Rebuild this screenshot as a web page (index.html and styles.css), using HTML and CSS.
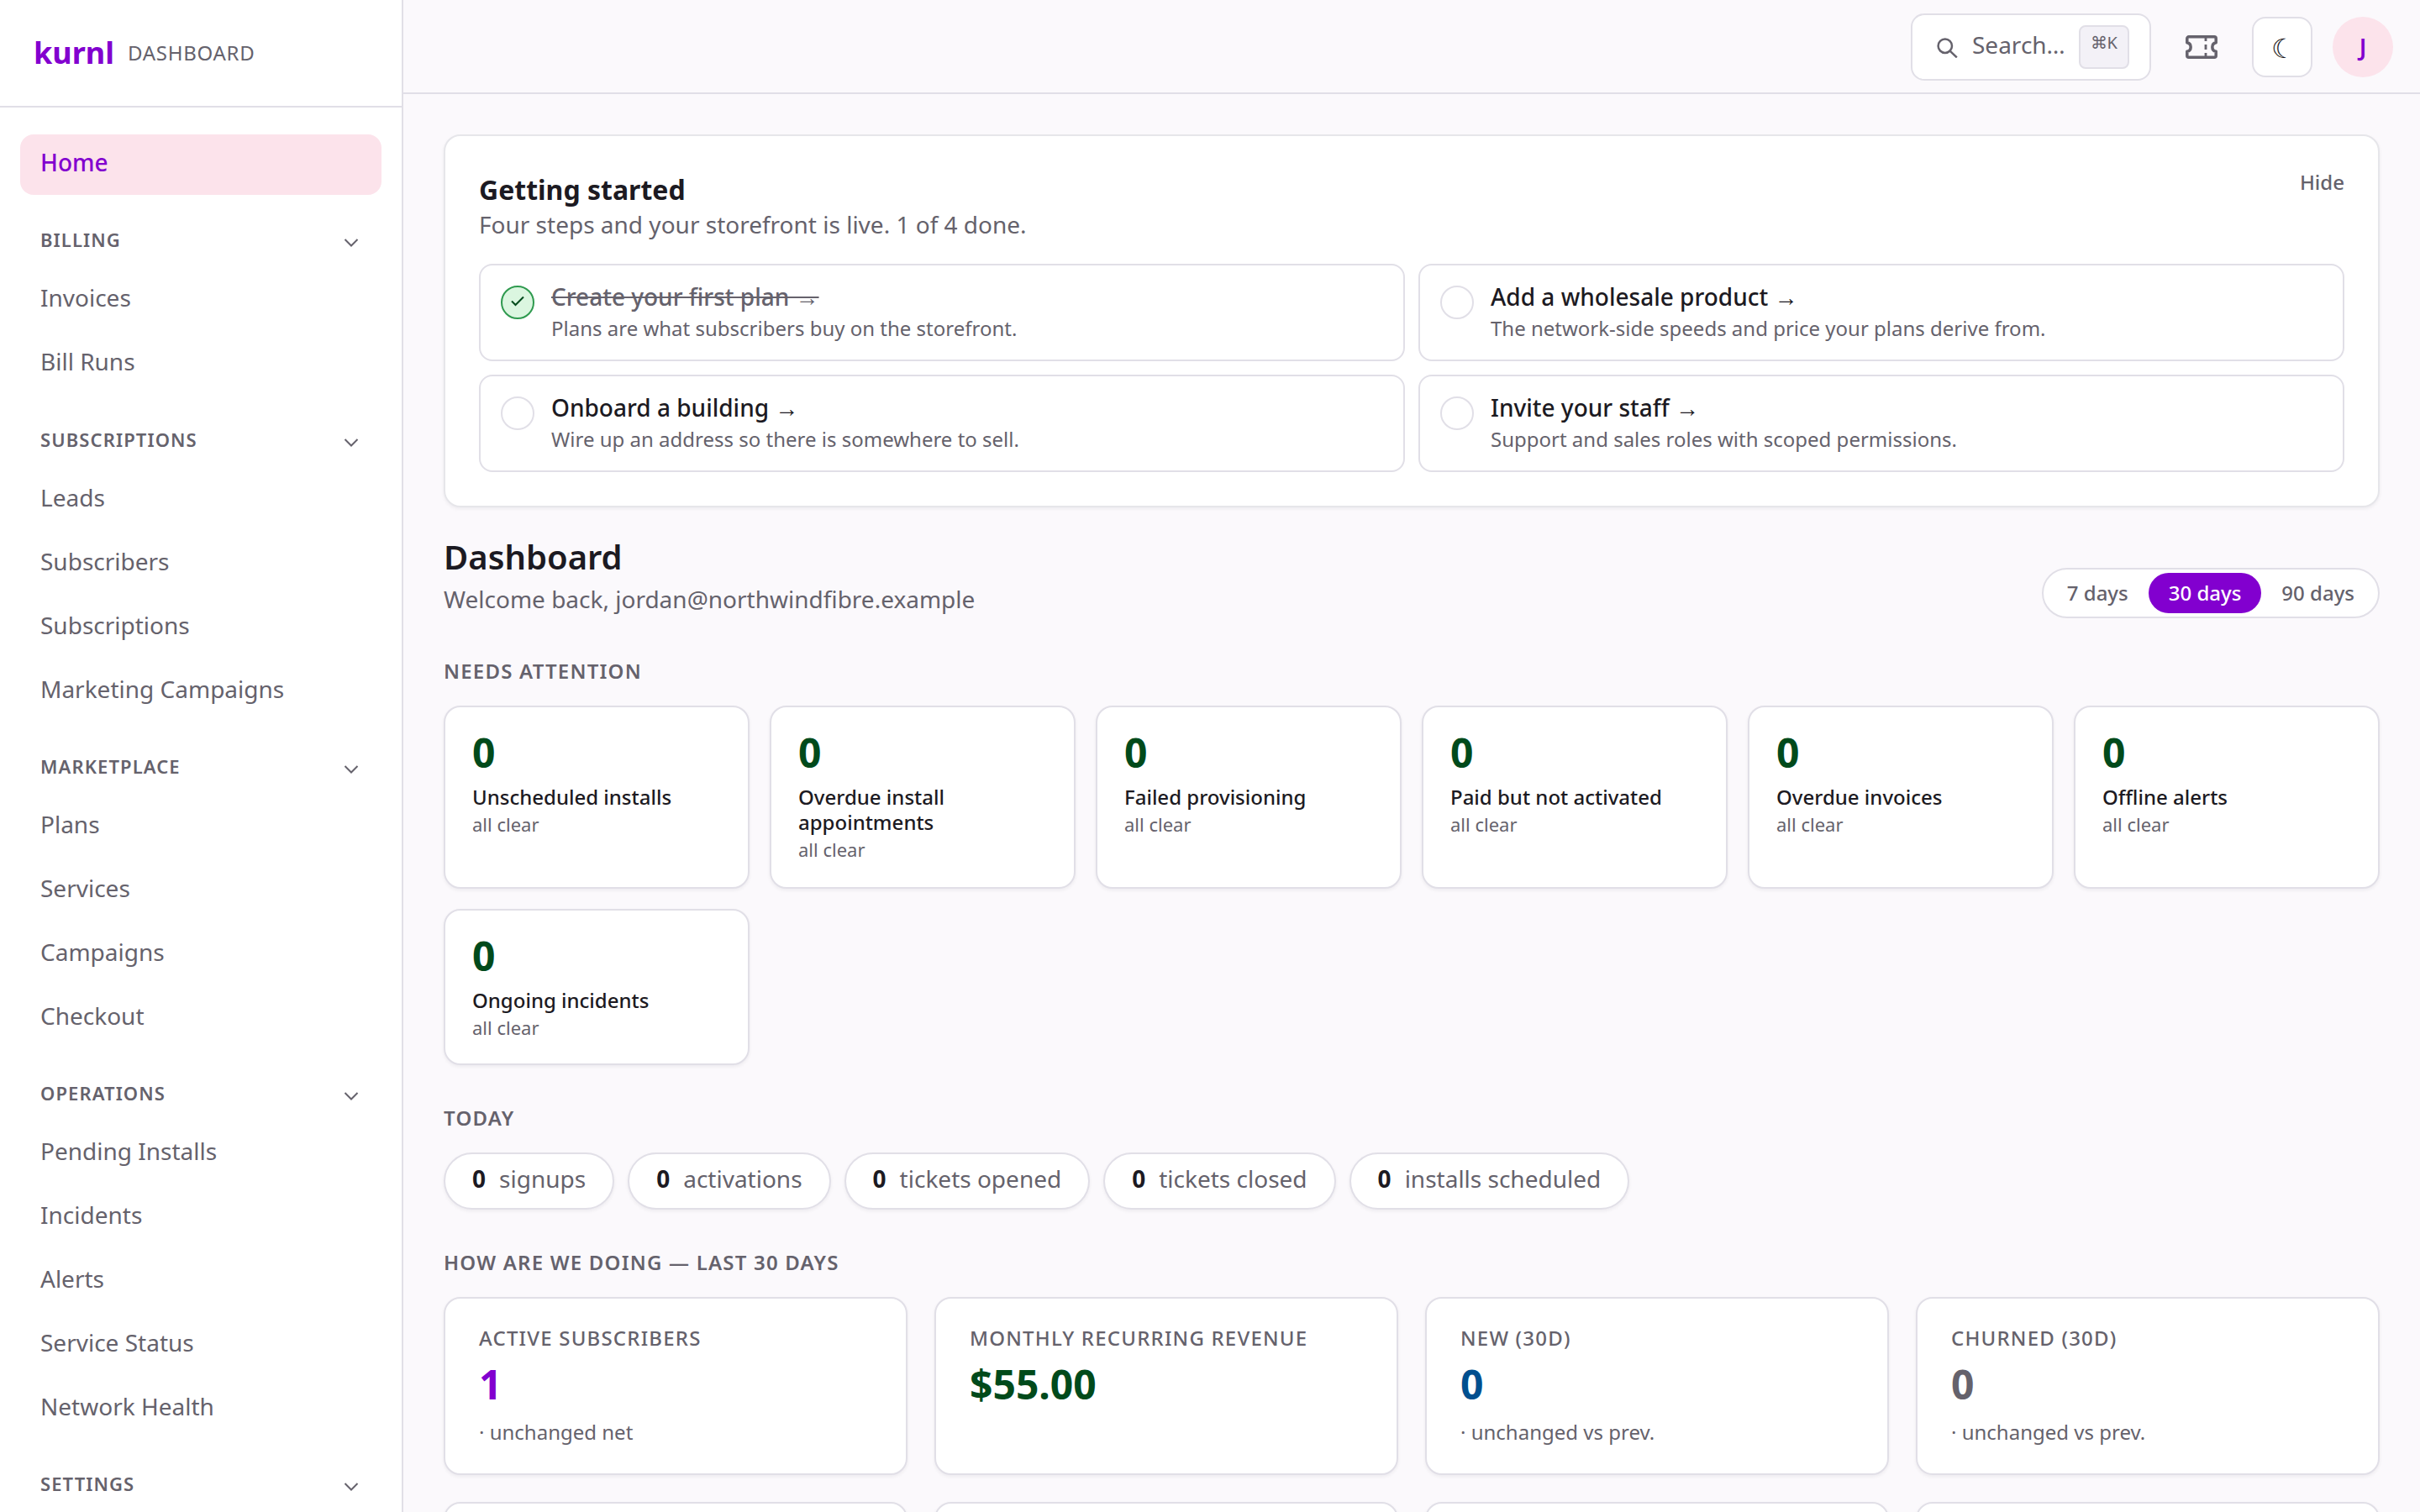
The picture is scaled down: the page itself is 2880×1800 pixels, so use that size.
FILE: index.html
```html
<!DOCTYPE html>
<html lang="en">
<head>
  <meta charset="UTF-8">
  <meta name="viewport" content="width=device-width, initial-scale=1.0">
  <title>kurnl dashboard</title>
  <link rel="stylesheet" href="styles.css">
</head>
<body>
  <svg width="0" height="0" class="sprite">
    <symbol id="chevron" viewBox="0 0 24 24">
      <path d="M4.5 12l7.5 7.5L19.5 12" fill="none" stroke="currentColor" stroke-width="2"/>
    </symbol>
  </svg>

  <aside class="sidebar">
    <div class="brand">
      <span class="brand-name">kurnl</span>
      <span class="brand-sub">Dashboard</span>
    </div>
    <nav class="nav">
      <a class="nav-link active">Home</a>

      <div class="nav-group">
        <div class="nav-title">Billing <svg class="chev"><use href="#chevron"/></svg></div>
        <a class="nav-link">Invoices</a>
        <a class="nav-link">Bill Runs</a>
      </div>

      <div class="nav-group">
        <div class="nav-title">Subscriptions <svg class="chev"><use href="#chevron"/></svg></div>
        <a class="nav-link">Leads</a>
        <a class="nav-link">Subscribers</a>
        <a class="nav-link">Subscriptions</a>
        <a class="nav-link">Marketing Campaigns</a>
      </div>

      <div class="nav-group">
        <div class="nav-title">Marketplace <svg class="chev"><use href="#chevron"/></svg></div>
        <a class="nav-link">Plans</a>
        <a class="nav-link">Services</a>
        <a class="nav-link">Campaigns</a>
        <a class="nav-link">Checkout</a>
      </div>

      <div class="nav-group">
        <div class="nav-title">Operations <svg class="chev"><use href="#chevron"/></svg></div>
        <a class="nav-link">Pending Installs</a>
        <a class="nav-link">Incidents</a>
        <a class="nav-link">Alerts</a>
        <a class="nav-link">Service Status</a>
        <a class="nav-link">Network Health</a>
      </div>

      <div class="nav-group">
        <div class="nav-title">Settings <svg class="chev"><use href="#chevron"/></svg></div>
      </div>
    </nav>
  </aside>

  <div class="page">
    <header class="topbar">
      <div class="search">
        <svg class="search-icon" viewBox="0 0 26 26" fill="none" stroke="currentColor" stroke-width="2.5">
          <circle cx="10.8" cy="11.7" r="8.2"/>
          <path d="M16.6 17.6L24.8 25.4"/>
        </svg>
        <span class="search-text">Search…</span>
        <kbd>⌘K</kbd>
      </div>
      <div class="icon-btn">
        <svg class="ticket-icon" viewBox="0 0 40 30" fill="none" stroke="currentColor" stroke-width="3.5">
          <path d="M4.8 2.8h30.4a2 2 0 0 1 2 2v4.9a5.4 5.4 0 0 0 0 10.6v4.9a2 2 0 0 1-2 2H4.8a2 2 0 0 1-2-2v-4.9a5.4 5.4 0 0 0 0-10.6V4.8a2 2 0 0 1 2-2z" stroke-linejoin="round"/>
          <path d="M25 4v4M25 12v6M25 22v4" stroke-width="2.8"/>
        </svg>
      </div>
      <div class="icon-btn bordered">☾</div>
      <div class="avatar">J</div>
    </header>

    <main class="content">
      <section class="setup">
        <div class="setup-head">
          <div>
            <h2>Getting started</h2>
            <p class="setup-text">Four steps and your storefront is live. 1 of 4 done.</p>
          </div>
          <span class="hide">Hide</span>
        </div>
        <div class="steps">
          <div class="step done">
            <span class="check">
              <svg viewBox="0 0 36 36" fill="none" stroke="currentColor" stroke-width="2">
                <path d="M11 16.5l4.5 4.5L25 11.5"/>
              </svg>
            </span>
            <div>
              <div class="step-title">Create your first plan →</div>
              <div class="step-desc">Plans are what subscribers buy on the storefront.</div>
            </div>
          </div>
          <div class="step">
            <span class="check"></span>
            <div>
              <div class="step-title">Add a wholesale product →</div>
              <div class="step-desc">The network-side speeds and price your plans derive from.</div>
            </div>
          </div>
          <div class="step">
            <span class="check"></span>
            <div>
              <div class="step-title">Onboard a building →</div>
              <div class="step-desc">Wire up an address so there is somewhere to sell.</div>
            </div>
          </div>
          <div class="step">
            <span class="check"></span>
            <div>
              <div class="step-title">Invite your staff →</div>
              <div class="step-desc">Support and sales roles with scoped permissions.</div>
            </div>
          </div>
        </div>
      </section>

      <div class="page-head">
        <div class="page-title">
          <h1>Dashboard</h1>
          <p class="welcome">Welcome back, jordan@northwindfibre.example</p>
        </div>
        <div class="range">
          <span>7 days</span>
          <span class="on">30 days</span>
          <span>90 days</span>
        </div>
      </div>

      <h3>Needs attention</h3>
      <div class="attention">
        <div class="tile"><b>0</b><div class="tile-label">Unscheduled installs</div><small>all clear</small></div>
        <div class="tile"><b>0</b><div class="tile-label">Overdue install appointments</div><small>all clear</small></div>
        <div class="tile"><b>0</b><div class="tile-label">Failed provisioning</div><small>all clear</small></div>
        <div class="tile"><b>0</b><div class="tile-label">Paid but not activated</div><small>all clear</small></div>
        <div class="tile"><b>0</b><div class="tile-label">Overdue invoices</div><small>all clear</small></div>
        <div class="tile"><b>0</b><div class="tile-label">Offline alerts</div><small>all clear</small></div>
        <div class="tile"><b>0</b><div class="tile-label">Ongoing incidents</div><small>all clear</small></div>
      </div>

      <h3>Today</h3>
      <div class="today">
        <div class="pill"><b>0</b>signups</div>
        <div class="pill"><b>0</b>activations</div>
        <div class="pill"><b>0</b>tickets opened</div>
        <div class="pill"><b>0</b>tickets closed</div>
        <div class="pill"><b>0</b>installs scheduled</div>
      </div>

      <h3>How are we doing — last 30 days</h3>
      <div class="stats">
        <div class="stat"><div class="stat-label">Active subscribers</div><div class="stat-value purple">1</div><div class="stat-delta">· unchanged net</div></div>
        <div class="stat"><div class="stat-label">Monthly recurring revenue</div><div class="stat-value green">$55.00</div></div>
        <div class="stat"><div class="stat-label">New (30d)</div><div class="stat-value blue">0</div><div class="stat-delta">· unchanged vs prev.</div></div>
        <div class="stat"><div class="stat-label">Churned (30d)</div><div class="stat-value">0</div><div class="stat-delta">· unchanged vs prev.</div></div>
        <div class="stat"></div>
        <div class="stat"></div>
        <div class="stat"></div>
        <div class="stat"></div>
      </div>
    </main>
  </div>
</body>
</html>
```
FILE: styles.css
```css
:root {
  --ink: #1c1a22;
  --muted: #65626c;
  --line: #e1dfe7;
  --purple: #8200cf;
  --pink: #fce3eb;
  --green: #004a1b;
  --shadow: 0 2px 4px rgba(20, 16, 40, 0.06);
}

* {
  box-sizing: border-box;
}

body {
  margin: 0;
  height: 1800px;
  overflow: hidden;
  display: flex;
  font-family: "Noto Sans", sans-serif;
  font-size: 28px;
  line-height: 40px;
  color: var(--ink);
  background: #fbf9fc;
}

h1, h2, h3, p {
  margin: 0;
}

.sprite {
  display: none;
}

/* sidebar */
.sidebar {
  width: 480px;
  height: 1800px;
  flex-shrink: 0;
  overflow: hidden;
  background: #fff;
  border-right: 2px solid var(--line);
}

.brand {
  display: flex;
  align-items: center;
  gap: 16px;
  height: 128px;
  padding: 0 40px;
  border-bottom: 2px solid var(--line);
}

.brand-name {
  font-size: 36px;
  font-weight: 700;
  color: var(--purple);
}

.brand-sub {
  font-size: 24px;
  letter-spacing: 0.72px;
  text-transform: uppercase;
  color: var(--muted);
}

.nav {
  padding: 32px 24px;
}

.nav-link {
  display: block;
  height: 72px;
  margin-bottom: 4px;
  padding: 13px 24px 0;
  border-radius: 16px;
  color: var(--muted);
}

.nav-link.active {
  margin-bottom: 4.4px;
  color: var(--purple);
  background: var(--pink);
  font-weight: 500;
}

.nav-title {
  display: flex;
  align-items: center;
  justify-content: space-between;
  height: 85.1px;
  padding: 13px 24px 0;
  font-size: 22px;
  font-weight: 600;
  letter-spacing: 1.1px;
  text-transform: uppercase;
  color: var(--muted);
}

.chev {
  width: 24px;
  height: 24px;
}

/* top bar */
.page {
  flex: 1;
  min-width: 0;
}

.topbar {
  display: flex;
  align-items: center;
  justify-content: flex-end;
  gap: 24px;
  height: 112px;
  padding: 2px 32px 0 0;
  border-bottom: 2px solid var(--line);
}

.search {
  display: flex;
  align-items: center;
  width: 286px;
  height: 80px;
  padding-left: 28px;
  background: #fff;
  border: 2px solid var(--line);
  border-radius: 16px;
  color: var(--muted);
}

.search-icon {
  width: 26px;
  height: 26px;
}

.search-text {
  margin: 0 16px 6px 17px;
}

kbd {
  width: 60px;
  height: 52px;
  padding-top: 3px;
  border: 2px solid var(--line);
  border-radius: 8px;
  background: #f3f1f7;
  font-family: inherit;
  font-size: 20px;
  line-height: 32px;
  text-align: center;
}

.icon-btn, .avatar {
  display: flex;
  align-items: center;
  justify-content: center;
  width: 72px;
  height: 72px;
}

.icon-btn {
  color: var(--muted);
}

.icon-btn.bordered {
  padding: 1px 0 0 3px;
  background: #fff;
  border: 2px solid var(--line);
  border-radius: 16px;
  font-size: 32px;
  color: var(--ink);
}

.ticket-icon {
  width: 40px;
  height: 30px;
}

.avatar {
  border-radius: 50%;
  background: var(--pink);
  color: var(--purple);
  font-weight: 600;
}

/* content */
.content {
  padding: 48px;
}

.setup {
  height: 444px;
  padding: 40px;
  background: #fff;
  border: 2px solid #e6e6ea;
  border-radius: 20px;
  box-shadow: var(--shadow);
}

.setup-head {
  display: flex;
  justify-content: space-between;
  height: 112px;
}

.setup-head h2 {
  padding-top: 2px;
  font-size: 32px;
  font-weight: 700;
  line-height: 43px;
}

.setup-text, .welcome {
  color: var(--muted);
}

.hide {
  font-size: 24px;
  font-weight: 500;
  line-height: 29px;
  color: var(--muted);
}

.steps {
  display: grid;
  grid-template-columns: 1fr 1fr;
  gap: 16px;
}

.step {
  display: flex;
  gap: 20px;
  height: 116px;
  padding: 24px;
  border: 2px solid var(--line);
  border-radius: 16px;
}

.check {
  width: 40px;
  height: 40px;
  border: 2px solid var(--line);
  border-radius: 50%;
}

.check svg {
  display: block;
}

.step.done .check {
  background: #dbf6e0;
  border-color: #2f9a4f;
  color: var(--green);
}

.step-title {
  font-weight: 500;
  line-height: 26px;
}

.step.done .step-title {
  color: var(--muted);
  text-decoration: line-through;
}

.step-desc {
  padding-top: 7px;
  font-size: 24px;
  line-height: 36px;
  color: var(--muted);
}

.page-head {
  display: flex;
  align-items: flex-end;
  justify-content: space-between;
  height: 132px;
}

.page-title {
  padding-bottom: 3px;
}

.page-title h1 {
  margin-bottom: 2px;
  font-size: 40px;
  font-weight: 600;
  line-height: 56px;
}

.range {
  display: flex;
  padding: 4px;
  background: #fff;
  border: 2px solid var(--line);
  border-radius: 30px;
}

.range span {
  padding: 6px 24px;
  border-radius: 24px;
  font-size: 24px;
  font-weight: 500;
  line-height: 36px;
  color: var(--muted);
}

.range .on {
  background: var(--purple);
  color: #fff;
}

h3 {
  height: 64px;
  margin-top: 40px;
  padding-top: 3px;
  font-size: 24px;
  font-weight: 600;
  letter-spacing: 1.2px;
  line-height: 39px;
  text-transform: uppercase;
  color: var(--muted);
}

.attention {
  display: grid;
  grid-template-columns: repeat(6, 1fr);
  grid-template-rows: 218px 186px;
  gap: 24px;
}

.tile, .pill, .stat {
  background: #fff;
  border: 2px solid var(--line);
  border-radius: 20px;
  box-shadow: var(--shadow);
}

.tile {
  padding: 28px 32px 0;
}

.tile b {
  display: block;
  font-size: 48px;
  line-height: 51px;
  color: var(--green);
}

.tile-label {
  padding-top: 13px;
  font-size: 24px;
  font-weight: 500;
  line-height: 30px;
}

.tile small {
  display: block;
  font-size: 22px;
  line-height: 34px;
  color: var(--muted);
}

.today {
  display: flex;
  gap: 16px;
}

.pill {
  height: 68px;
  padding: 9px 32px;
  border-radius: 34px;
  color: var(--muted);
}

.pill b {
  margin-right: 16px;
  color: var(--ink);
}

.stats {
  display: grid;
  grid-template-columns: repeat(4, 1fr);
  gap: 32px;
}

.stat {
  height: 212px;
  padding: 32px 40px;
}

.stat-label {
  font-size: 24px;
  font-weight: 500;
  letter-spacing: 1.2px;
  line-height: 29px;
  text-transform: uppercase;
  color: var(--muted);
}

.stat-value {
  font-size: 48px;
  font-weight: 700;
  line-height: 81px;
  color: var(--muted);
}

.purple { color: var(--purple); }
.green { color: var(--green); }
.blue { color: #004f8f; }

.stat-delta {
  font-size: 24px;
  line-height: 33px;
  color: var(--muted);
}
```
